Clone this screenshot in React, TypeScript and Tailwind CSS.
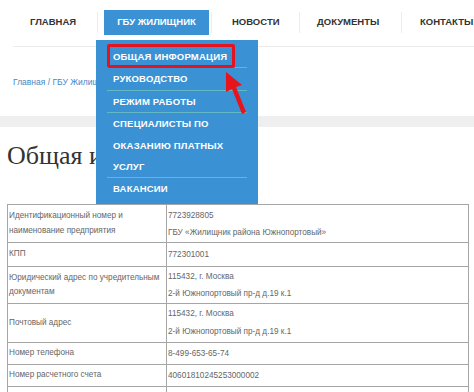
import React from 'react';

const navItems = [
  { label: 'ГЛАВНАЯ', w: 'w-[97px]', pl: 'pl-[30px]' },
  { label: 'ГБУ ЖИЛИЩНИК', w: 'w-[113px]', pl: 'pl-[6px]', active: true },
  { label: 'НОВОСТИ', w: 'w-[87px]', pl: 'pl-[20px]' },
  { label: 'ДОКУМЕНТЫ', w: 'w-[101px]', pl: 'pl-[17px]' },
  { label: 'КОНТАКТЫ', w: 'w-[76px]', pl: 'pl-[18px]' }
];

const menu = [
  ['ОБЩАЯ ИНФОРМАЦИЯ'],
  ['РУКОВОДСТВО'],
  ['РЕЖИМ РАБОТЫ'],
  ['СПЕЦИАЛИСТЫ ПО', 'ОКАЗАНИЮ ПЛАТНЫХ', 'УСЛУГ'],
  ['ВАКАНСИИ']
];

const rows = [
  { h: 'h-[38px]', left: ['Идентификационный номер и', 'наименование предприятия'], right: ['7723928805', 'ГБУ «Жилищник района Южнопортовый»'] },
  { h: 'h-[24px]', left: ['КПП'], right: ['772301001'] },
  { h: 'h-[37px]', left: ['Юридический адрес по учредительным', 'документам'], right: ['115432, г. Москва', '2-й Южнопортовый пр-д д.19 к.1'] },
  { h: 'h-[39px]', left: ['Почтовый адрес'], right: ['115432, г. Москва', '2-й Южнопортовый пр-д д.19 к.1'], tall: true },
  { h: 'h-[22px]', left: ['Номер телефона'], right: ['8-499-653-65-74'] },
  { h: 'h-[22px]', left: ['Номер расчетного счета'], right: ['40601810245253000002'] },
  { h: 'h-[22px]', left: [''], right: [''] }
];

export default function App() {
  return <div className="relative w-[474px] h-[392px] overflow-hidden bg-white font-['Liberation_Sans',Arial,sans-serif]">
      {/* top navigation */}
      <div className="flex items-center pt-[10px] h-[35px]">
        {navItems.map((item, i) => <div key={item.label} className="flex items-center h-[25px]">
            {i > 0 && <div className="w-px h-[21px] bg-[#ededed]" />}
            <div className={`${item.w} ${item.pl} flex items-center h-[25px]`}>
              {item.active ? <div className="h-[25px] w-[105px] bg-[#3a92d4] text-white flex items-center justify-center text-[9.5px] font-bold">
                  {item.label}
                </div> : <span className="text-[9.5px] font-bold text-[#333]">{item.label}</span>}
            </div>
          </div>)}
      </div>
      <div className="ml-[13px] mt-[11px] h-px bg-[#ececec]" />

      {/* breadcrumb */}
      <div className="pl-[13px] mt-[30px] text-[8.5px] text-[#4a84c2] leading-[10px]">
        Главная / ГБУ Жилищник / Общая информация
      </div>

      <div className="mt-[29px] h-[11px] bg-[#efefef]" />

      <h1 className="pl-[7px] mt-[14px] font-['Liberation_Serif','Times_New_Roman',serif] text-[26px] leading-[30px] text-[#333]">
        Общая информация
      </h1>

      {/* table */}
      <table className="ml-[7px] mt-[33px] w-[462px] border-collapse text-[8.2px] text-[#666] table-fixed">
        <tbody>
          {rows.map((r, i) => <tr key={i} className={r.h}>
              <td className="w-[159px] border border-[#a6a6a6] px-[1px] align-middle leading-[14.5px]">
                {r.left.map(t => <div key={t}>{t}</div>)}
              </td>
              <td className={`border border-[#a6a6a6] px-[1px] align-middle ${r.tall ? 'leading-[18px]' : 'leading-[17px]'}`}>
                {r.right.map(t => <div key={t}>{t}</div>)}
              </td>
            </tr>)}
        </tbody>
      </table>

      {/* dropdown menu */}
      <div className="absolute left-[96px] top-[40px] w-[162px] h-[164px] bg-[#3a92d4] pt-[6px] px-[11px]">
        {menu.map((lines, i) => <div key={i} className={i < menu.length - 1 ? 'border-b border-[#62b9c4]' : ''}>
            {lines.map(l => <div key={l} className="pl-[6px] leading-[21.4px] text-[9.5px] font-bold tracking-[0.2px] text-white">{l}</div>)}
          </div>)}
      </div>

      {/* highlight box */}
      <div className="absolute left-[107px] top-[44px] w-[128px] h-[24px] border-[3px] border-[#e3141f] rounded-[2px]" />

      {/* arrow */}
      <svg className="absolute left-[215px] top-[68px]" width="40" height="52" viewBox="0 0 40 52">
        <polygon points="11,4 27,17 21,19 31,44 27,46 17,21 11,24" fill="#e8141c" />
      </svg>
    </div>;
}
